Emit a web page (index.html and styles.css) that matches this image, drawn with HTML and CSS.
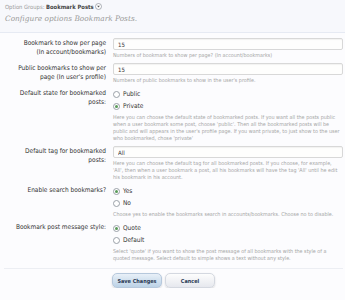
FILE: index.html
```html
<!DOCTYPE html>
<html lang="en">
<head>
    <meta charset="UTF-8">
    <meta name="viewport" content="width=device-width, initial-scale=1.0">
    <title>Bookmark Posts Options</title>
    <link rel="stylesheet" href="styles.css">
</head>
<body>
    <div class="header">
        <div class="crumbs">Option Groups: <b>Bookmark Posts</b> <span class="menu-icon"><svg width="7" height="7" viewBox="0 0 7 7"><circle cx="3.5" cy="3.5" r="3" fill="#fff" stroke="#8a8f9a" stroke-width="0.7"/><path d="M2.1 2.8 L3.5 4.5 L4.9 2.8 Z" fill="#555"/></svg></span></div>
        <div class="title">Configure options Bookmark Posts.</div>
    </div>

    <form class="options-form">
        <div class="row">
            <label class="label">Bookmark to show per page (In account/bookmarks)</label>
            <div class="control">
                <input type="text" class="text-input" value="15">
                <p class="hint">Numbers of bookmark to show per page? (In account/bookmarks)</p>
            </div>
        </div>

        <div class="row">
            <label class="label">Public bookmarks to show per page (In user's profile)</label>
            <div class="control">
                <input type="text" class="text-input" value="15">
                <p class="hint">Numbers of public bookmarks to show in the user's profile.</p>
            </div>
        </div>

        <div class="row">
            <label class="label">Default state for bookmarked posts:</label>
            <div class="control">
                <div class="radio"><span class="dot"></span>Public</div>
                <div class="radio"><span class="dot checked"></span>Private</div>
                <p class="hint">Here you can choose the default state of bookmarked posts. If you want all the posts public when a user bookmark some post, choose 'public'. Then all the bookmarked posts will be public and will appears in the user's profile page. If you want private, to just show to the user who bookmarked, chose 'private'</p>
            </div>
        </div>

        <div class="row">
            <label class="label">Default tag for bookmarked posts:</label>
            <div class="control">
                <input type="text" class="text-input" value="All">
                <p class="hint">Here you can choose the default tag for all bookmarked posts. If you choose, for example, 'All', then when a user bookmark a post, all his bookmarks will have the tag 'All' until he edit his bookmark in his account.</p>
            </div>
        </div>

        <div class="row">
            <label class="label">Enable search bookmarks?</label>
            <div class="control">
                <div class="radio"><span class="dot checked"></span>Yes</div>
                <div class="radio"><span class="dot"></span>No</div>
                <p class="hint">Choose yes to enable the bookmarks search in accounts/bookmarks. Choose no to disable.</p>
            </div>
        </div>

        <div class="row">
            <label class="label">Bookmark post message style:</label>
            <div class="control">
                <div class="radio"><span class="dot checked"></span>Quote</div>
                <div class="radio"><span class="dot"></span>Default</div>
                <p class="hint">Select 'quote' if you want to show the post message of all bookmarks with the style of a quoted message. Select default to simple shows a text without any style.</p>
            </div>
        </div>

        <div class="buttons">
            <button type="button" class="button primary">Save Changes</button>
            <button type="button" class="button">Cancel</button>
        </div>
    </form>
</body>
</html>
```

FILE: styles.css
```css
body {
    font-family: "DejaVu Sans Condensed", "DejaVu Sans", sans-serif;
    background-color: #fcfcfe;
    color: #333;
    margin: 0;
    padding: 0;
}

.header {
    background-color: #f7f8fc;
    border-bottom: 1px solid #e6eaf3;
    height: 32px;
    padding: 0 5px;
}

.crumbs {
    font-size: 5.8px;
    line-height: 8px;
    padding-top: 3px;
    color: #9a9a9a;
}

.crumbs b {
    color: #444;
}

.menu-icon svg {
    vertical-align: -1px;
}

.title {
    font-family: "DejaVu Serif", "Liberation Serif", serif;
    font-style: italic;
    font-size: 7.4px;
    line-height: 10px;
    margin-top: 3px;
    color: #9a9a9a;
}

.options-form {
    padding: 5px 2px 0 15px;
}

.row {
    display: grid;
    grid-template-columns: 91px 1fr;
    gap: 7px;
    margin-bottom: 4px;
}

.label {
    text-align: right;
    font-size: 6.5px;
    line-height: 9px;
    padding-top: 1px;
    color: #333;
}

.text-input {
    display: block;
    box-sizing: border-box;
    width: 100%;
    height: 12px;
    border: 1px solid #d8d8d8;
    border-radius: 2px;
    background: #fefefd;
    box-shadow: inset 0 1px 1px rgba(0, 0, 0, 0.05);
    font-family: inherit;
    font-size: 6px;
    color: #333;
    padding: 0 4px;
}

.radio {
    display: flex;
    align-items: center;
    gap: 3px;
    height: 12px;
    font-size: 6.5px;
    color: #333;
}

.dot {
    box-sizing: border-box;
    width: 7px;
    height: 7px;
    border: 1px solid #9aa0a8;
    border-radius: 50%;
    background: #fff;
    display: flex;
    align-items: center;
    justify-content: center;
}

.dot.checked::after {
    content: "";
    width: 3px;
    height: 3px;
    border-radius: 50%;
    background: #5a9a5a;
}

.hint {
    margin: 2px 0 0;
    font-size: 5.38px;
    line-height: 7px;
    color: #a6a6a6;
}

.buttons {
    border-top: 1px solid #eceef3;
    margin: 6px 0 0 -11px;
    padding: 4px 0 0 108px;
    display: flex;
    gap: 3px;
}

.button {
    font-family: inherit;
    font-size: 5.5px;
    font-weight: bold;
    white-space: nowrap;
    color: #2a3a55;
    width: 50px;
    height: 15px;
    padding: 0;
    border: 1px solid #d4d8e0;
    border-radius: 5px;
    background: linear-gradient(#fdfdfd, #e6e8ee);
    box-shadow: 0 1px 2px rgba(0, 0, 0, 0.15);
    cursor: pointer;
}

.button.primary {
    background: linear-gradient(#e8f0f8, #bcd2e6);
    border-color: #b6c8dc;
}
```
